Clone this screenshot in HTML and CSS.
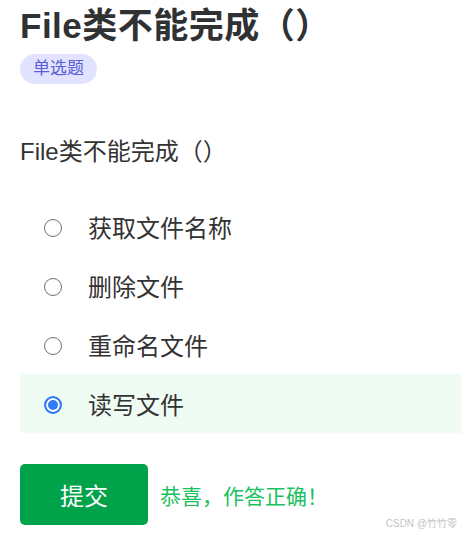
FILE: index.html
```html
<!DOCTYPE html>
<html lang="zh-CN">
<head>
<meta charset="utf-8">
<title>单选题</title>
<link rel="stylesheet" href="styles.css">
</head>
<body>
<main class="page">
  <h1 class="title">File类不能完成（）</h1>
  <span class="badge">单选题</span>
  <p class="question">File类不能完成（）</p>
  <ul class="options">
    <li class="option"><span class="radio"></span><span class="label">获取文件名称</span></li>
    <li class="option"><span class="radio"></span><span class="label">删除文件</span></li>
    <li class="option"><span class="radio"></span><span class="label">重命名文件</span></li>
    <li class="option selected"><span class="radio checked"></span><span class="label">读写文件</span></li>
  </ul>
  <div class="actions">
    <button class="submit" type="button">提交</button>
    <span class="result">恭喜，作答正确！</span>
  </div>
</main>
<div class="watermark">CSDN @竹竹零</div>
</body>
</html>
```

FILE: styles.css
```css
html, body {
  margin: 0;
  padding: 0;
  background: #fff;
}
body {
  font-family: "Liberation Sans", "Noto Sans CJK SC", sans-serif;
  color: #333;
  width: 461px;
  height: 534px;
  overflow: hidden;
  position: relative;
}
.page {
  padding: 5px 0 0 20px;
  display: flex;
  flex-direction: column;
  align-items: flex-start;
}
.title {
  margin: 0;
  font-size: 35px;
  line-height: 41px;
  font-weight: 700;
  color: #303133;
  letter-spacing: 0.5px;
}
.badge {
  margin-top: 8px;
  height: 30px;
  line-height: 30px;
  padding: 0 13px;
  font-size: 17px;
  border-radius: 15px;
  background: #e1e3ff;
  color: #5b5ed8;
}
.question {
  margin: 52px 0 0;
  font-size: 24px;
  line-height: 32px;
  color: #333;
}
.options {
  list-style: none;
  margin: 29px 0 0;
  padding: 0;
  align-self: stretch;
}
.option {
  height: 59px;
  display: flex;
  align-items: center;
  padding-left: 24px;
  border-radius: 4px 0 0 4px;
}
.option.selected {
  background: #eefcf3;
}
.radio {
  width: 18px;
  height: 18px;
  margin-top: 2px;
  box-sizing: border-box;
  border: 1.5px solid #707070;
  border-radius: 50%;
  background: #fff;
  flex: none;
}
.radio.checked {
  border: 2px solid #2f7cf6;
  background: #2f7cf6;
  box-shadow: inset 0 0 0 2px #fff;
}
.label {
  margin-left: 26px;
  padding-top: 4px;
  font-size: 24px;
  line-height: 32px;
  color: #333;
}
.actions {
  margin-top: 31px;
  display: flex;
  align-items: center;
  gap: 12px;
}
.submit {
  width: 128px;
  height: 61px;
  border: none;
  border-radius: 5px;
  background: #00a24a;
  color: #fff;
  font-family: inherit;
  font-size: 24px;
  padding: 0;
}
.result {
  font-size: 21px;
  color: #19c160;
}
.watermark {
  position: absolute;
  right: 4px;
  bottom: 4px;
  font-size: 10px;
  color: #c4c4c4;
}
```
